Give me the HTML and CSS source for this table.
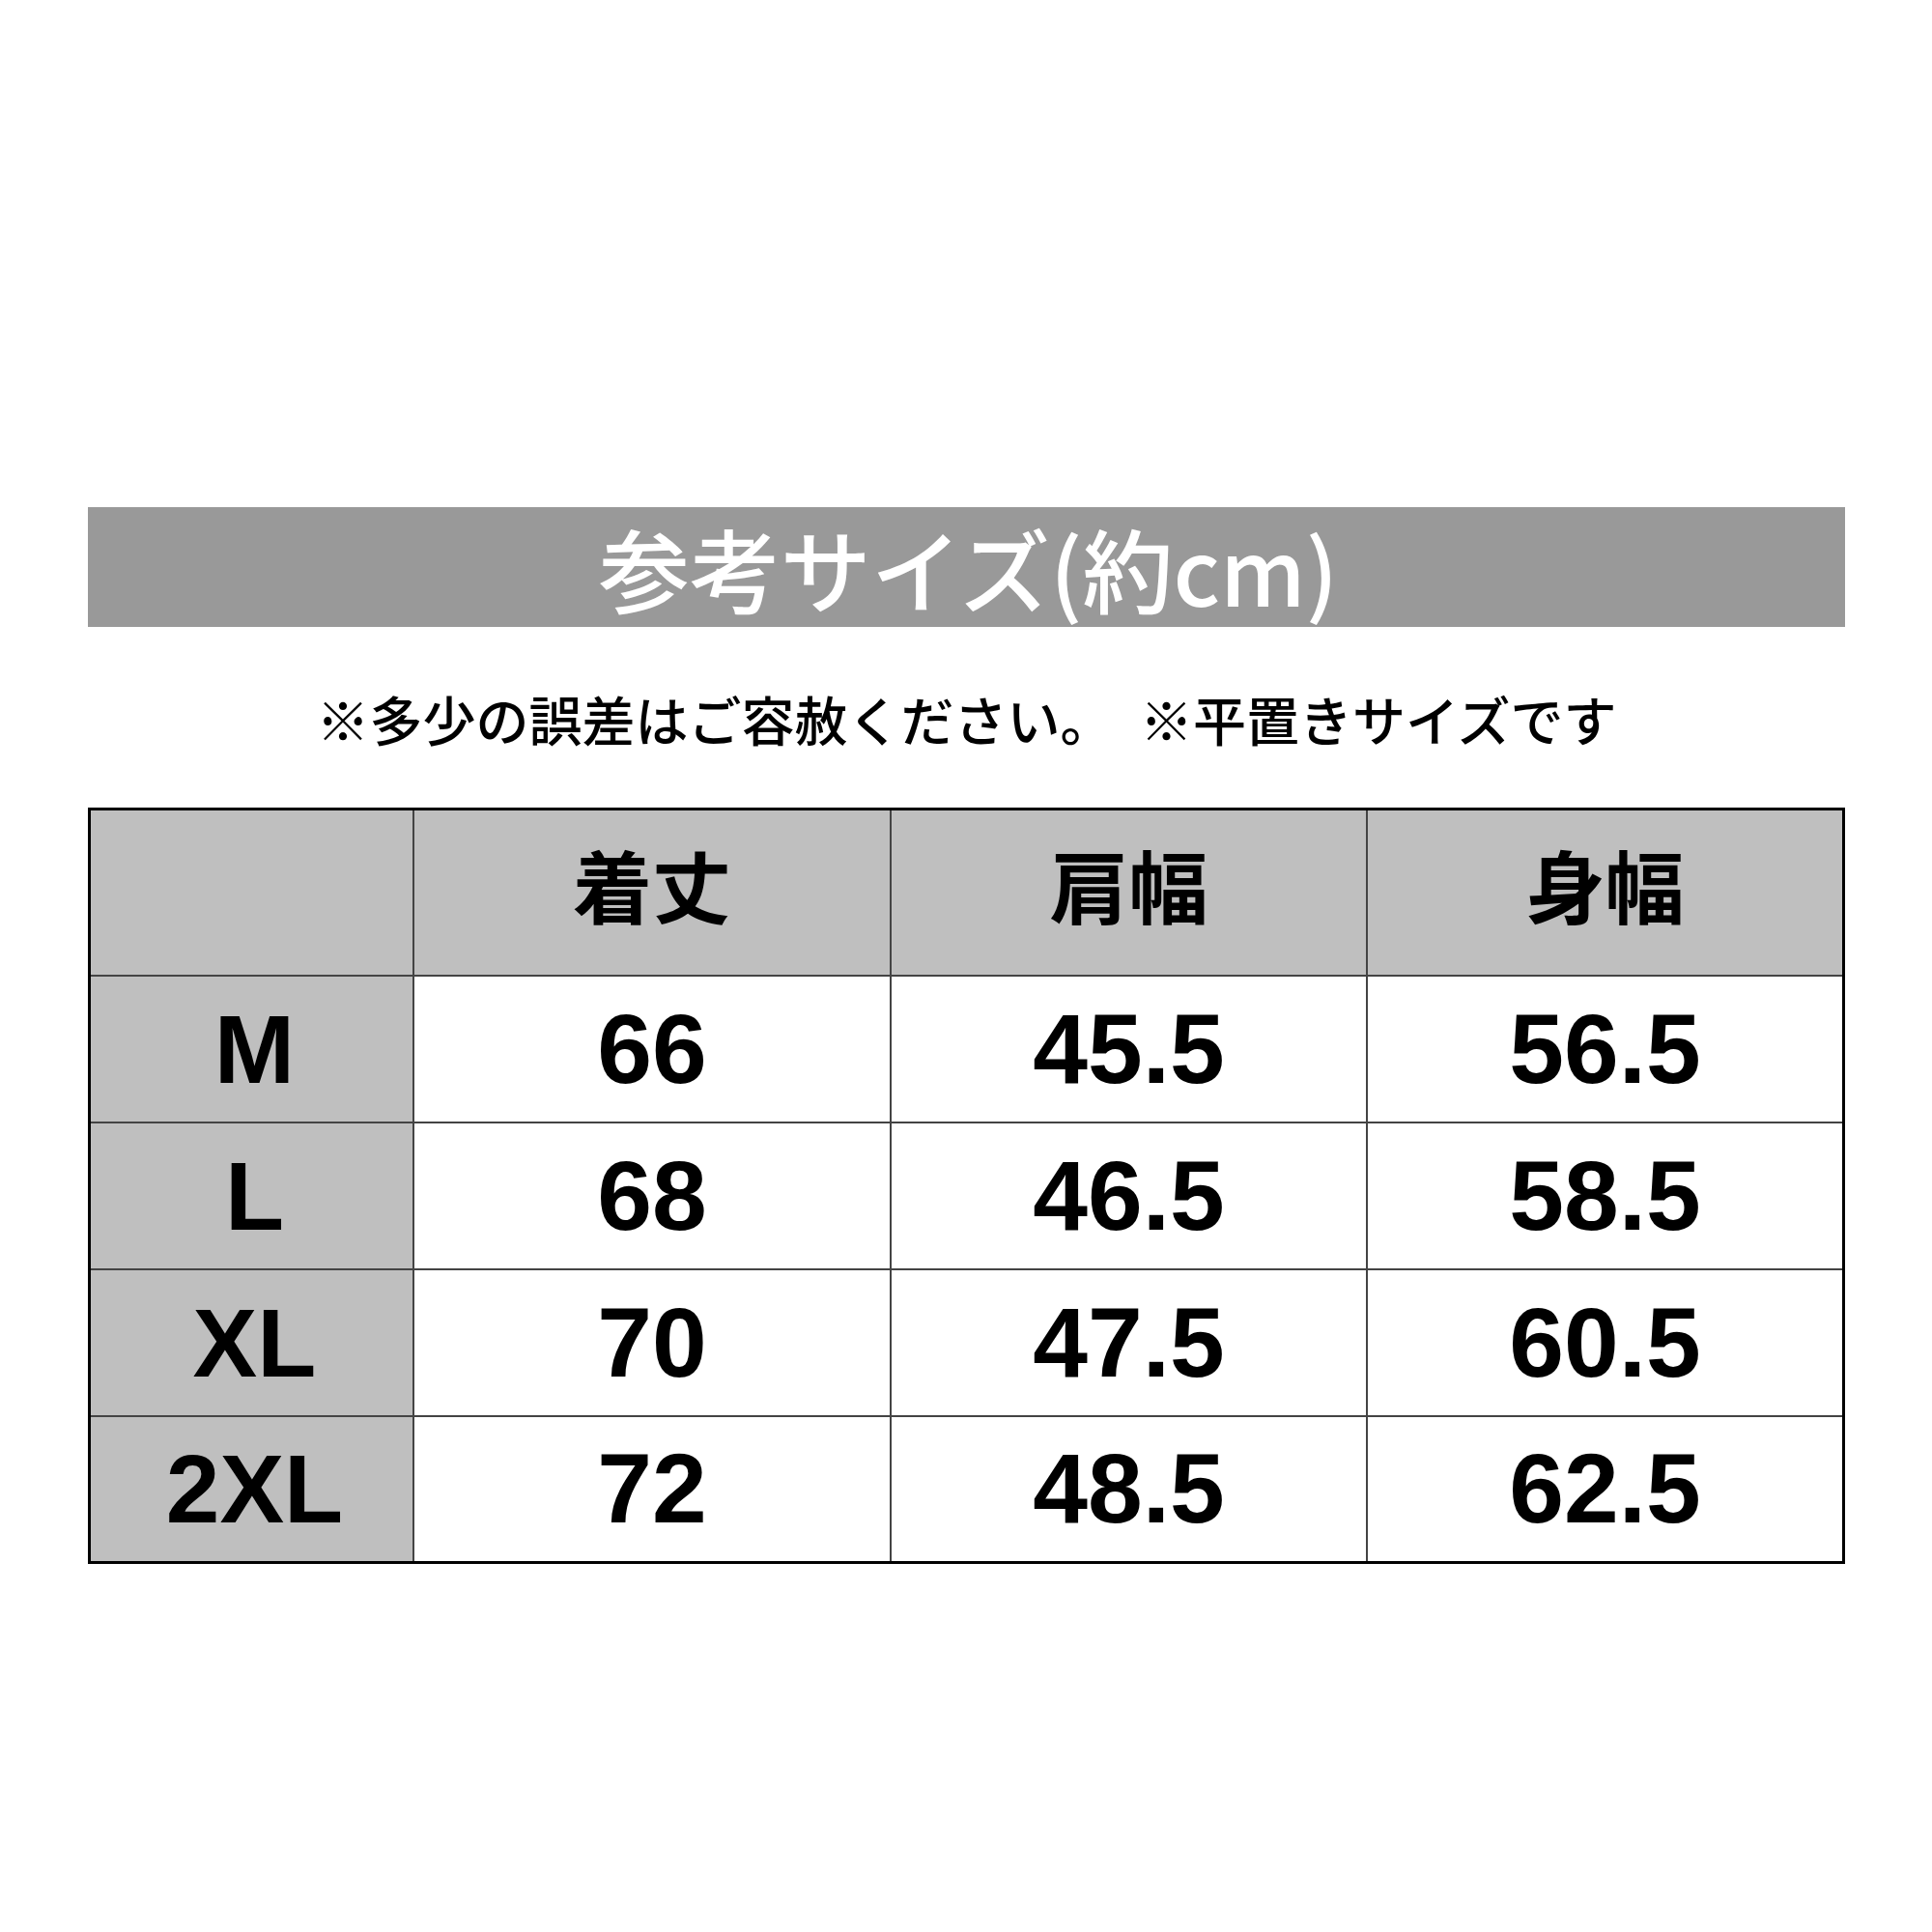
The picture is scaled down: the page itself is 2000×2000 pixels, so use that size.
FILE: index.html
```html
<!DOCTYPE html>
<html lang="ja">
<head>
<meta charset="utf-8">
<link rel="stylesheet" href="styles.css">
</head>
<body>
<div class="page">
  <div class="banner"><span class="title">参考サイズ(約cm)</span></div>
  <p class="note">※多少の誤差はご容赦ください。　※平置きサイズです</p>
  <div class="table">
    <div class="cell head"></div>
    <div class="cell head jp">着丈</div>
    <div class="cell head jp">肩幅</div>
    <div class="cell head jp">身幅</div>

    <div class="cell size">M</div>
    <div class="cell num">66</div>
    <div class="cell num">45.5</div>
    <div class="cell num">56.5</div>

    <div class="cell size">L</div>
    <div class="cell num">68</div>
    <div class="cell num">46.5</div>
    <div class="cell num">58.5</div>

    <div class="cell size">XL</div>
    <div class="cell num">70</div>
    <div class="cell num">47.5</div>
    <div class="cell num">60.5</div>

    <div class="cell size">2XL</div>
    <div class="cell num">72</div>
    <div class="cell num">48.5</div>
    <div class="cell num">62.5</div>
  </div>
</div>
</body>
</html>
```
FILE: styles.css
```css
html, body {
  margin: 0;
  padding: 0;
  background: #ffffff;
}
.page {
  width: 2000px;
  height: 2000px;
  box-sizing: border-box;
  padding: 525px 90px 0 91px;
}
.banner {
  height: 124px;
  background: #999999;
  display: flex;
  align-items: center;
  justify-content: center;
}
.title {
  font-family: "Noto Sans CJK JP", "Noto Sans", sans-serif;
  font-weight: 500;
  font-size: 94px;
  line-height: 1;
  color: #ffffff;
  padding-left: 4px;
}
.note {
  margin: 64px 0 0 0;
  height: 60px;
  line-height: 60px;
  text-align: center;
  font-family: "Noto Sans CJK JP", "Noto Sans", sans-serif;
  font-weight: 500;
  font-size: 55px;
  color: #000000;
}
.table {
  margin-top: 63px;
  display: grid;
  grid-template-columns: 333px 492px 491px 491px;
  grid-template-rows: 170px 150px 150px 150px 149px;
  gap: 2px;
  background: #444444;
  border: 3px solid #000000;
}
.cell {
  display: flex;
  align-items: center;
  justify-content: center;
  background: #ffffff;
  color: #000000;
}
.head {
  background: #bfbfbf;
}
.jp {
  font-family: "Noto Sans CJK JP", sans-serif;
  font-weight: 700;
  font-size: 82px;
  padding-bottom: 20px;
  box-sizing: border-box;
}
.size {
  background: #bfbfbf;
  font-family: "Liberation Sans", Arial, sans-serif;
  font-weight: 700;
  font-size: 100px;
  padding-left: 6px;
}
.num {
  font-family: "Liberation Sans", Arial, sans-serif;
  font-weight: 700;
  font-size: 102px;
}
```
